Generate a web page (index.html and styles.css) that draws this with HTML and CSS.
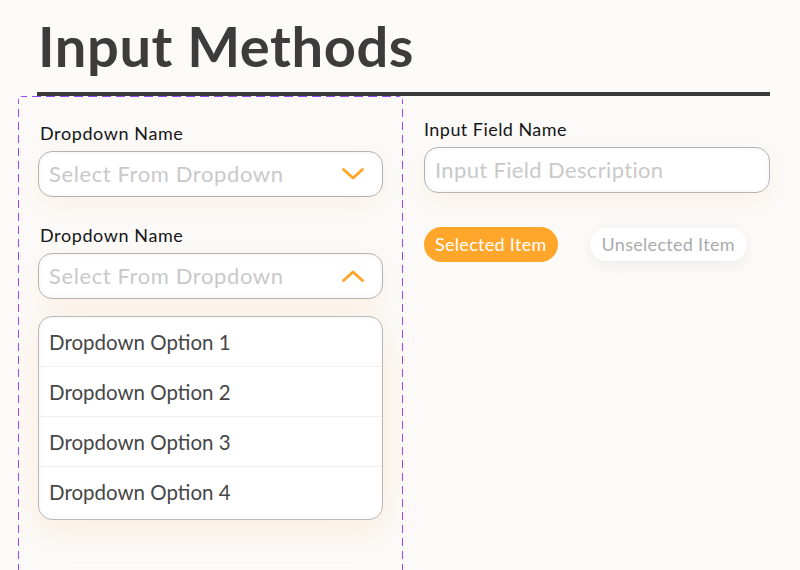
FILE: index.html
```html
<!DOCTYPE html>
<html lang="en">
<head>
<meta charset="utf-8">
<title>Input Methods</title>
<link rel="stylesheet" href="styles.css">
</head>
<body>
<div class="page">
  <header class="header">
    <h1 class="title">Input Methods</h1>
  </header>
  <div class="content">
    <section class="panel">
      <div class="field">
        <div class="label">Dropdown Name</div>
        <div class="box select">
          <span class="placeholder">Select From Dropdown</span>
          <svg class="chev" width="24" height="14" viewBox="0 0 24 14"><path d="M2.5 2.5 L12 11 L21.5 2.5" fill="none" stroke="#ffa62b" stroke-width="3" stroke-linecap="round" stroke-linejoin="round"/></svg>
        </div>
      </div>
      <div class="field field-open">
        <div class="label">Dropdown Name</div>
        <div class="box select">
          <span class="placeholder">Select From Dropdown</span>
          <svg class="chev" width="24" height="14" viewBox="0 0 24 14"><path d="M2.5 11.5 L12 3 L21.5 11.5" fill="none" stroke="#ffa62b" stroke-width="3" stroke-linecap="round" stroke-linejoin="round"/></svg>
        </div>
        <ul class="options">
          <li class="option">Dropdown Option 1</li>
          <li class="option">Dropdown Option 2</li>
          <li class="option">Dropdown Option 3</li>
          <li class="option">Dropdown Option 4</li>
        </ul>
      </div>
    </section>
    <section class="side">
      <div class="field">
        <div class="label label-side">Input Field Name</div>
        <div class="box input">
          <span class="placeholder placeholder-side">Input Field Description</span>
        </div>
      </div>
      <div class="chips">
        <span class="chip chip-on">Selected Item</span>
        <span class="chip chip-off">Unselected Item</span>
      </div>
    </section>
  </div>
</div>
</body>
</html>
```

FILE: styles.css
```css
* { box-sizing: border-box; }
html, body {
  margin: 0;
  padding: 0;
  background: #fbfaf9;
  font-family: Lato, "Open Sans", "Noto Sans", sans-serif;
  overflow: hidden;
}
.page {
  width: 800px;
  height: 570px;
  padding-top: 18px;
}
.header {
  margin-left: 37px;
  width: 733px;
  padding-bottom: 18px;
  border-bottom: 4px solid #3a3a3a;
}
.title {
  margin: 0;
  font-size: 56px;
  line-height: 56px;
  font-weight: 700;
  color: #3c3c3c;
  padding-left: 1px;
  letter-spacing: 0.6px;
}
.content {
  display: flex;
  margin-left: 18px;
  gap: 21px;
}
.panel {
  width: 385px;
  height: 520px;
  border-radius: 5px;
  padding: 26px 20px 0 20px;
  display: flex;
  flex-direction: column;
  gap: 27px;
  background:
    repeating-linear-gradient(90deg, #9747ff 0 9px, transparent 9px 14px) left top / 100% 1px no-repeat,
    repeating-linear-gradient(180deg, #9747ff 0 8px, transparent 8px 13px) left top / 1px 100% no-repeat,
    repeating-linear-gradient(180deg, #9747ff 0 8px, transparent 8px 13px) right top / 1px 100% no-repeat;
}
.side {
  width: 346px;
  padding-top: 22px;
}
.field {
  display: flex;
  flex-direction: column;
  gap: 7px;
}
.label {
  font-size: 18px;
  line-height: 22px;
  color: #161616;
  letter-spacing: 0.6px;
  padding-left: 2px;
}
.label-side {
  letter-spacing: 0.45px;
  padding-left: 0;
}
.box {
  height: 46px;
  background: #fff;
  border: 1px solid #b4b4b4;
  border-radius: 14px;
  box-shadow: inset 0 0 5px rgba(0,0,0,0.06), 0 8px 30px rgba(255,160,60,0.10);
  display: flex;
  align-items: center;
  padding: 0 17px 0 10px;
}
.select { justify-content: space-between; }
.placeholder {
  font-size: 22px;
  line-height: 44px;
  color: #c9c9c9;
  letter-spacing: 0.6px;
}
.placeholder-side {
  letter-spacing: 0.35px;
}
.chev { display: block; }
.options {
  list-style: none;
  margin: 10px 0 0 0;
  padding: 0 0 2px 0;
  background: #fff;
  border: 1px solid #b8b8b8;
  border-radius: 14px;
  box-shadow: inset 0 0 5px rgba(0,0,0,0.05), 0 10px 36px rgba(255,160,60,0.16);
  overflow: hidden;
}
.option {
  height: 50px;
  line-height: 50px;
  padding-left: 10px;
  font-size: 20.5px;
  color: #474747;
  border-bottom: 1px solid #f0f0f0;
}
.option:last-child { border-bottom: 0; }
.chips {
  margin-top: 34px;
  display: flex;
  align-items: center;
  gap: 32px;
}
.chip {
  height: 35px;
  line-height: 35px;
  padding: 0 11px;
  border-radius: 18px;
  font-size: 18px;
  letter-spacing: 0.3px;
}
.chip-on {
  background: #ffa62b;
  color: #fff;
}
.chip-off {
  height: 33px;
  line-height: 33px;
  padding: 0 12px;
  background: #fff;
  color: #ababab;
  box-shadow: 0 4px 16px rgba(0,0,0,0.06);
}
```
